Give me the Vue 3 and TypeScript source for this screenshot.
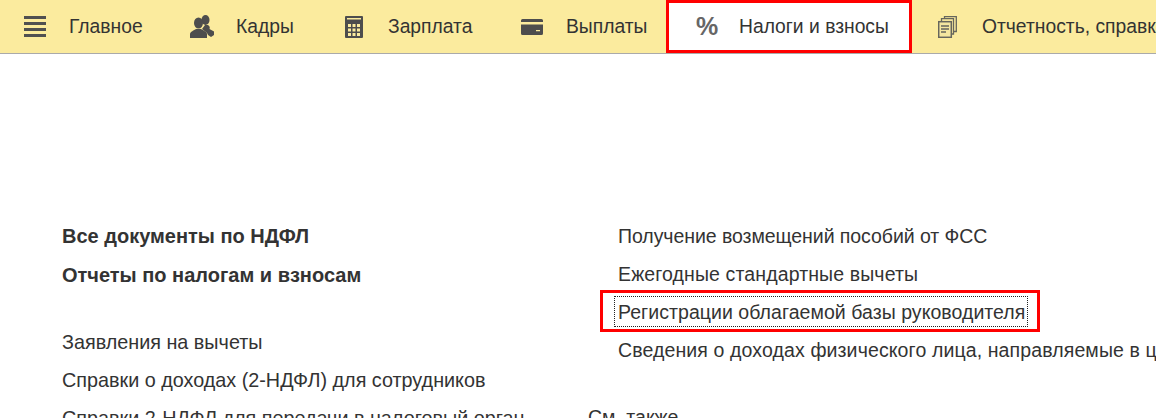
<script setup lang="ts">
const leftTop: string[] = ['Все документы по НДФЛ', 'Отчеты по налогам и взносам']
const leftBottom: string[] = ['Заявления на вычеты', 'Справки о доходах (2-НДФЛ) для сотрудников', 'Справки 2-НДФЛ для передачи в налоговый орган']
</script>

<template>
  <div class="page">
    <nav class="nav">
      <a class="tab t1">
        <svg class="ic" width="22" height="21" viewBox="0 0 22 21"><path d="M0 0h22v3H0zM0 6h22v3H0zM0 12h22v3H0zM0 18h22v3H0z" fill="#505050"/></svg>
        <span>Главное</span>
      </a>
      <a class="tab t2">
        <svg class="ic" width="24" height="23" viewBox="0 0 24 23"><g fill="#4d4d4d"><ellipse cx="15.500" cy="5" rx="4" ry="5"/><path d="M15 10h3c2 1 2 3 1.500 4l4.500 2.500V20l-3 2-3-2-1-2-5-4z"/><ellipse cx="8.500" cy="8" rx="4.500" ry="5.500"/><path d="M0 23v-4c0-2 4-4 6-5h5c2 1 6 3 6 5v4z"/></g></svg>
        <span>Кадры</span>
      </a>
      <a class="tab t3">
        <svg class="ic" width="18" height="22" viewBox="0 0 18 22"><path fill="#4d4d4d" fill-rule="evenodd" d="M1 0h16a1 1 0 0 1 1 1v20a1 1 0 0 1-1 1H1a1 1 0 0 1-1-1V1a1 1 0 0 1 1-1zM2 2v1.500h14V2zM3 8v3h3V8zM7.500 8v3h3V8zM12 8v3h3V8zM3 12.500v3h3v-3zM7.500 12.500v3h3v-3zM12 12.500v3h3v-3zM3 17v3h3v-3zM7.500 17v3h3v-3zM12 17v3h3v-3z"/></svg>
        <span>Зарплата</span>
      </a>
      <a class="tab t4">
        <svg class="ic" width="22" height="16" viewBox="0 0 22 16"><path fill="#4d4d4d" fill-rule="evenodd" d="M1.500 0h19A1.500 1.500 0 0 1 22 1.500V3H0V1.500A1.500 1.500 0 0 1 1.500 0zM0 5.500h22v9A1.500 1.500 0 0 1 20.500 16h-19A1.500 1.500 0 0 1 0 14.500zM15 11v1.300h4V11z"/></svg>
        <span>Выплаты</span>
      </a>
      <a class="tab active">
        <span class="pct">%</span>
        <span>Налоги и взносы</span>
      </a>
      <a class="tab t6">
        <svg class="ic" width="19" height="22" viewBox="0 0 19 22"><g fill="none" stroke="#66665c" stroke-width="1.300"><rect x="0.700" y="5.700" width="12.600" height="15.600" fill="#f3e6a0" stroke-width="1.500"/><path d="M3.500 5V2.700h12V18h-2M6.500 2.500V.7h11.800V15.500h-2.500"/><path d="M3 10h8M3 13h8M3 16h5"/></g></svg>
        <span>Отчетность, справки</span>
      </a>
    </nav>

    <main class="content">
      <section class="left">
        <ul class="list strong">
          <li v-for="item in leftTop" :key="item">{{ item }}</li>
        </ul>
        <ul class="list lower">
          <li v-for="item in leftBottom" :key="item">{{ item }}</li>
        </ul>
      </section>
      <section class="right">
        <ul class="list inset">
          <li class="tight">Получение возмещений пособий от ФСС</li>
          <li class="loose">Ежегодные стандартные вычеты</li>
          <li class="focused"><span class="focus">Регистрации облагаемой базы руководителя</span></li>
          <li class="loose">Сведения о доходах физического лица, направляемые в ц</li>
        </ul>
        <div class="also">См. также</div>
      </section>
    </main>
  </div>
</template>

<style>
html, body { margin: 0; background: #fff; }
</style>

<style scoped>
.page {
  width: 1156px;
  height: 418px;
  overflow: hidden;
  background: #fff;
  color: #333;
  font-family: "Liberation Sans", Arial, sans-serif;
  font-size: 19.500px;
}
.nav {
  display: flex;
  height: 53px;
  background: #fbeb9e;
  border-bottom: 1px solid #aaa;
  white-space: nowrap;
  overflow: hidden;
  font-size: 19.300px;
}
.tab {
  display: flex;
  align-items: center;
  flex: none;
  box-sizing: border-box;
  height: 53px;
  padding-left: 24px;
}
.ic { flex: none; }
.t1 { gap: 23px; width: 166px; }
.t2 { gap: 22px; width: 155px; }
.t3 { gap: 25px; width: 176px; }
.t4 { gap: 23px; width: 169px; }
.active {
  width: 246px;
  padding-left: 27px;
  gap: 22px;
  background: #fff;
  border: 3px solid #f00;
}
.pct {
  width: 21px;
  font-size: 25px;
  font-weight: 700;
  color: #666;
  text-align: center;
}
.t6 { padding-left: 26px; gap: 25px; }
.content {
  display: grid;
  grid-template-columns: 526px 1fr;
  padding: 163px 0 0 62px;
}
.list { margin: 0; padding: 0; list-style: none; }
.list li { height: 38px; line-height: 38px; white-space: nowrap; }
.strong { font-weight: 700; font-size: 20px; }
.strong li:first-child { height: 39px; }
.lower { margin-top: 29px; font-size: 19.800px; }
.inset { padding-left: 30px; }
.tight { letter-spacing: -0.060px; }
.loose { letter-spacing: 0.120px; }
.focused { position: relative; letter-spacing: 0.050px; }
.focused::after {
  content: "";
  position: absolute;
  left: -18px;
  top: -3px;
  width: 440px;
  height: 42px;
  box-sizing: border-box;
  border: 3px solid #f00;
  pointer-events: none;
}
.focus { outline: 1px dotted #222; padding: 4px 2px 3px 3px; margin-left: -3px; }
.also { margin-top: 29px; line-height: 38px; }
</style>
